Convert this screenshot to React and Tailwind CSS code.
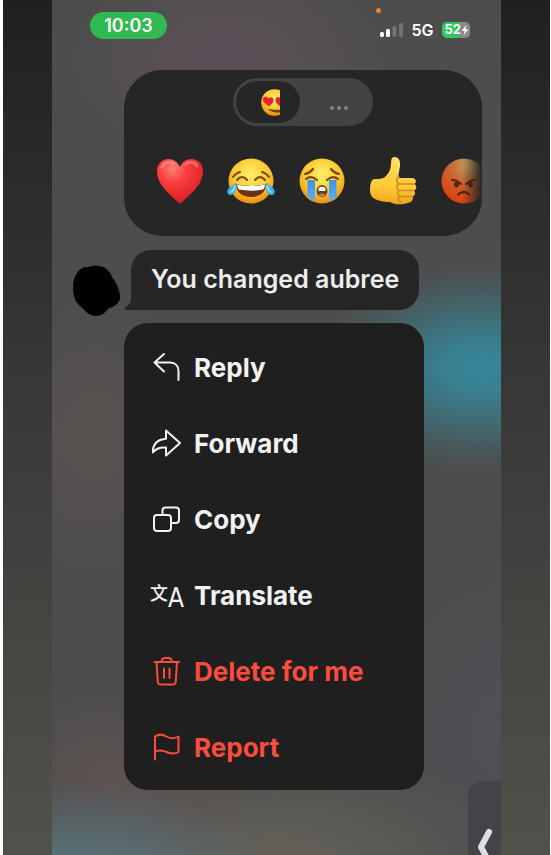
import { useState } from 'react';

const ink = { fill: 'none', stroke: 'currentColor', strokeWidth: 2, strokeLinecap: 'round', strokeLinejoin: 'round' };

function ReplyIcon() {
  return (
    <svg viewBox="0 0 30 30" className="size-[30px] shrink-0" aria-hidden="true" {...ink}>
      <path d="M12 2 2.500 10.500l9.500 9M2.500 10.500H18c5.500 0 8.500 3.500 8.500 8.500V28" />
    </svg>
  );
}

function ForwardIcon() {
  return (
    <svg viewBox="0 0 30 30" className="size-[30px] shrink-0" aria-hidden="true" {...ink}>
      <path d="M14 2.500 28 15 14 27.500v-8C8 19 3.500 21 .8 24.500 .8 16 5 11.500 14 10.800z" />
    </svg>
  );
}

function CopyIcon() {
  return (
    <svg viewBox="0 0 30 30" className="size-[30px] shrink-0" aria-hidden="true" {...ink}>
      <rect x="2" y="11" width="17" height="16" rx="3" />
      <path d="M10.500 11V6.500c0-2 1-3 3-3H24c2 0 3 1 3 3V16c0 2-1 3-3 3h-5" />
    </svg>
  );
}

function TranslateIcon() {
  return (
    <svg viewBox="0 0 30 30" className="size-[30px] shrink-0 overflow-visible" aria-hidden="true" fill="currentColor">
      <text x="-2" y="20" fontSize="18" fontWeight="500" fontFamily="'Noto Sans CJK SC', sans-serif">文</text>
      <text x="16" y="27" fontSize="26" fontWeight="400" fontFamily="'Liberation Sans Narrow', 'DejaVu Sans Condensed', sans-serif">A</text>
    </svg>
  );
}

function TrashIcon() {
  return (
    <svg viewBox="0 0 30 30" className="size-[30px] shrink-0" aria-hidden="true" {...ink}>
      <path d="M2.500 6h24.500M9.500 6c.3-3 1.500-4 3.500-4h3.500c2 0 3.200 1 3.500 4M4.500 6l1.300 20c.2 1.700 1 2.500 2.700 2.500H21c1.700 0 2.500-.8 2.700-2.500L25 6M12 12.500v9.500M17.500 12.500v9.500" />
    </svg>
  );
}

function FlagIcon() {
  return (
    <svg viewBox="0 0 30 30" className="size-[30px] shrink-0" aria-hidden="true" {...ink}>
      <path d="M3 27.500V4.500C7 1.500 11 2.500 14.500 4.500S22 7 26.500 4.500V20c-4.500 2.500-8.500 1.500-12 0S7 17.500 3 20" />
    </svg>
  );
}

function EmojiPaint() {
  return (
    <svg width="0" height="0" className="absolute" aria-hidden="true">
      <defs>
        <radialGradient id="face" cx="50%" cy="36%" r="66%">
          <stop offset="0" stopColor="#fff06a" />
          <stop offset=".6" stopColor="#fdc92f" />
          <stop offset="1" stopColor="#e8860f" />
        </radialGradient>
        <radialGradient id="heart" cx="35%" cy="22%" r="85%">
          <stop offset="0" stopColor="#ff8078" />
          <stop offset=".35" stopColor="#f9403f" />
          <stop offset="1" stopColor="#d9161d" />
        </radialGradient>
        <linearGradient id="tear" x1="0" y1="0" x2="0" y2="1">
          <stop offset="0" stopColor="#3f8fe6" />
          <stop offset="1" stopColor="#57b4fa" />
        </linearGradient>
        <linearGradient id="hand" x1="0" y1="0" x2="0" y2="1">
          <stop offset="0" stopColor="#ffdf5c" />
          <stop offset=".6" stopColor="#ffcb3b" />
          <stop offset="1" stopColor="#f2a51f" />
        </linearGradient>
        <radialGradient id="angry" cx="62%" cy="12%" r="85%">
          <stop offset="0" stopColor="#c5a765" />
          <stop offset=".45" stopColor="#c66e38" />
          <stop offset="1" stopColor="#dc4310" />
        </radialGradient>
      </defs>
    </svg>
  );
}

function HeartEmoji() {
  return (
    <svg viewBox="0 0 48 48" className="size-12 shrink-0">
      <path d="M24 47C16 39 1 29 1 14 1 7 6 2 12.500 2c5 0 9.500 3 11.500 8 2-5 6.500-8 11.500-8C42 2 47 7 47 14c0 15-15 25-23 33z" fill="url(#heart)" />
      <path d="M6 10c2-5 8-6 12-3M30 7c4-3 9-2 11 2" fill="none" stroke="#ffa29a" strokeOpacity=".5" strokeWidth="3" strokeLinecap="round" />
    </svg>
  );
}

function JoyEmoji() {
  return (
    <svg viewBox="0 0 48 48" className="size-12 shrink-0">
      <circle cx="24" cy="24" r="22.500" fill="url(#face)" />
      <path d="M6 20q3-4 7-5M42 20q-3-4-7-5M10 23q5-6 10 0M28 23q5-6 10 0" fill="none" stroke="#7a4510" strokeWidth="2" strokeLinecap="round" />
      <path d="M9 27c9 2.500 21 2.500 30 0 0 8-6 13-15 13S9 35 9 27z" fill="#6b3410" />
      <path d="M10 27.500c9 2 19 2 28 0 0 2.500-1 4-2 5-8 1.500-16 1.500-24 0-1-1-2-2.500-2-5z" fill="#fff" />
      <path d="M9 25c1 6-.5 12-5 13-4 .5-5-4-2-7 2-2 5-3 7-6zM39 25c-1 6 .5 12 5 13 4 .5 5-4 2-7-2-2-5-3-7-6z" fill="#38b5f2" />
      <path d="M4 35c2 0 3-3 4-6M44 35c-2 0-3-3-4-6" fill="none" stroke="#a9e6ff" strokeWidth="1.500" strokeLinecap="round" />
    </svg>
  );
}

function SobEmoji() {
  return (
    <svg viewBox="0 0 48 48" className="size-12 shrink-0">
      <circle cx="24" cy="24" r="22.500" fill="url(#face)" />
      <path d="M9.500 23H17v21q-4-1-7.500-5zM31 23h7.500v16q-3 4-7.500 5z" fill="url(#tear)" />
      <path d="M7 17q5-1 8-5M41 17q-5-1-8-5M8 22q5-4 11 1M40 22q-5-4-11 1" fill="none" stroke="#7a4510" strokeWidth="2.200" strokeLinecap="round" />
      <ellipse cx="24" cy="34" rx="5.500" ry="6" fill="#75400f" />
      <path d="M20.500 31q3.500-2.500 7 0v3h-7z" fill="#fff" />
      <ellipse cx="24" cy="38" rx="3" ry="1.500" fill="#b3855b" />
    </svg>
  );
}

function ThumbEmoji() {
  return (
    <svg viewBox="0 0 48 48" className="size-12 shrink-0">
      <path d="M3 23c3-2 9 0 13-3 4-4 6-8 6-13 0-5 1-7.500 4-7 4 .5 5.500 4 5 9l-2 12h14c4 0 5 4 2.500 6 2.500 1.500 2.500 5.500-.5 6.500 2 2 1 5.500-1.500 6 1 3-.5 5.500-3.500 6-6 2.500-14 2.500-19-.5-5 0-9-.5-14-2.500-4-1.500-6-5-6-9.500 0-4 .5-7.500 2-9.500z" fill="url(#hand)" />
      <path d="M30 20c-3 1-3 5 0 7h15M30 27c-3 1-3 5 0 6.500h14M30 33.500c-2 2-2 4.500 1 6h12M30 39.500c-1 2-1 4 2 5.500" fill="none" stroke="#d08a18" strokeWidth="1.600" strokeLinecap="round" />
      <path d="M28 3c2 2 2 7 0 12" fill="none" stroke="#ffe98a" strokeWidth="1.500" strokeLinecap="round" />
    </svg>
  );
}

function AngryEmoji() {
  return (
    <svg viewBox="0 0 48 48" className="size-12 shrink-0">
      <circle cx="24" cy="24" r="22.500" fill="url(#angry)" />
      <path d="M12 23q5 0 9 4M35 23q-5 0-9 4" fill="none" stroke="#5b2110" strokeWidth="2.200" strokeLinecap="round" />
      <ellipse cx="16.500" cy="27.500" rx="2.500" ry="3" fill="#5b2110" />
      <ellipse cx="30.500" cy="27.500" rx="2.500" ry="3" fill="#5b2110" />
      <path d="M18 37.500q5.500-5 11 0" fill="none" stroke="#5b2110" strokeWidth="2.200" strokeLinecap="round" />
    </svg>
  );
}

// only the left part of the face is visible in the tab
function HeartEyesEmoji() {
  return (
    <svg viewBox="0 0 19 27" className="h-[27px] w-[19px]">
      <circle cx="13.500" cy="13.500" r="13.300" fill="url(#face)" />
      <path d="M8 17.500C5 15 1.500 13 2 9.500 3 7 6 7 7.500 9.500c2-2.500 5-1 5 1.500 0 3-2.500 4.500-4.500 6.500zM19 17.500c-2-2-4.500-3.500-4.500-6.500 0-2.500 3-4 4.500-2z" fill="#e52432" />
      <path d="M6.500 19.500c4 1.300 8 1.500 12.500 1.300v2.700c-5 .5-9-.5-12.500-4z" fill="#70400f" />
    </svg>
  );
}

const reactions = [
  { name: 'Love', Emoji: HeartEmoji },
  { name: 'Laugh', Emoji: JoyEmoji },
  { name: 'Cry', Emoji: SobEmoji },
  { name: 'Like', Emoji: ThumbEmoji },
  { name: 'Angry', Emoji: AngryEmoji },
];

const actions = [
  { label: 'Reply', Icon: ReplyIcon },
  { label: 'Forward', Icon: ForwardIcon },
  { label: 'Copy', Icon: CopyIcon },
  { label: 'Translate', Icon: TranslateIcon },
  { label: 'Delete for me', Icon: TrashIcon, danger: true },
  { label: 'Report', Icon: FlagIcon, danger: true },
];

function StatusBar() {
  return (
    <header className="flex h-[70px] items-start justify-between pt-3 pr-[31px] pl-[38px]">
      <div className="flex h-[27px] w-[77px] items-center justify-center rounded-full bg-[#2fb950] text-lg font-semibold text-white">
        10:03
      </div>
      <div className="relative flex h-9 items-center gap-2 text-white">
        <span className="absolute -top-1 -left-1 size-[5px] rounded-full bg-[#e78432]" />
        <svg viewBox="0 0 23 14" className="h-[14px] w-[23px]" aria-hidden="true">
          <rect x="0" y="9" width="4" height="5" rx="1.500" fill="#fff" />
          <rect x="6" y="6" width="4" height="8" rx="1.500" fill="#fff" />
          <rect x="12.500" y="3" width="4" height="11" rx="1.500" fill="#737373" />
          <rect x="19" y="0" width="4" height="14" rx="1.500" fill="#737373" />
        </svg>
        <span className="text-base font-semibold">5G</span>
        <span className="flex h-4 items-center rounded-[5px] bg-linear-to-r from-[#32c759] from-60% to-[#8b8b8b] to-60% pr-px pl-[3px] text-[13px] font-bold">
          52
          <svg viewBox="0 0 8 12" className="h-[10px] w-2" aria-hidden="true">
            <path d="M5.500 0 0 7h3.500L2.500 12 8 5H4.500z" fill="#fff" />
          </svg>
        </span>
      </div>
    </header>
  );
}

function ReactionPanel() {
  const [tab, setTab] = useState('emoji');

  return (
    <section className="relative mr-[19px] ml-[72px] overflow-hidden rounded-[38px] bg-[#262626] pt-2 pb-[31px]">
      <div className="mx-auto flex h-12 w-[140px] rounded-full bg-[#434343] p-[3px]">
        <button
          aria-label="Emoji reactions"
          onClick={() => setTab('emoji')}
          className={`flex w-16 items-center justify-center rounded-full pl-1 ${tab === 'emoji' ? 'bg-[#262626]' : ''}`}
        >
          <HeartEyesEmoji />
        </button>
        <button
          aria-label="More reactions"
          onClick={() => setTab('more')}
          className={`flex flex-1 items-center justify-center gap-[3px] rounded-full pt-3 pl-2 ${tab === 'more' ? 'bg-[#262626]' : ''}`}
        >
          <span className="size-1 rounded-full bg-[#858585]" />
          <span className="size-1 rounded-full bg-[#858585]" />
          <span className="size-1 rounded-full bg-[#858585]" />
        </button>
      </div>
      <div className="mt-[31px] flex gap-[23px] overflow-hidden pl-8">
        {reactions.map(({ name, Emoji }) => (
          <button key={name} aria-label={name} className="shrink-0">
            <Emoji />
          </button>
        ))}
      </div>
      <div className="pointer-events-none absolute inset-y-0 right-0 w-5 bg-linear-to-r from-transparent to-[#262626]" />
    </section>
  );
}

function Message() {
  return (
    <div className="mt-[14px] flex items-end pl-[21px]">
      <svg viewBox="0 0 47 51" className="-mb-[6px] h-[51px] w-[47px] shrink-0" aria-hidden="true">
        <path d="M12 2C17 3 20-1 26 1c7 1 11 5 13 11 4 5 7 11 8 18 1 7-4 11-11 13-4 4-6 8-13 8C15 51 12 45 6 40 1 35 0 28 0 22 0 12 5 4 12 2z" fill="#020001" />
      </svg>
      <div className="relative ml-[11px] flex h-[60px] items-center rounded-[20px] bg-[#262626] px-5 text-[25px] font-semibold text-[#ededed]">
        <svg viewBox="0 0 24 26" className="absolute bottom-0 -left-[7px] h-[26px] w-6" aria-hidden="true">
          <path d="M7 0v15c0 4-2 6-6 8.500-1.500 1-.5 2.500 1 2.500h22z" fill="#262626" />
        </svg>
        <p className="relative whitespace-nowrap">You changed aubree</p>
      </div>
    </div>
  );
}

function ActionMenu() {
  return (
    <nav className="mt-[13px] ml-[72px] w-[300px] rounded-3xl bg-[#1f1f1f] pt-[6px] pb-[5px]">
      {actions.map(({ label, Icon, danger }) => (
        <button
          key={label}
          className={`flex h-[76px] w-full items-center gap-3 pl-7 text-[26px] font-bold ${danger ? 'text-[#fb4c3d]' : 'text-[#f2f2f2]'}`}
        >
          <Icon />
          {label}
        </button>
      ))}
    </nav>
  );
}

export default function App() {
  return (
    <div className="min-h-screen bg-white pr-px pl-[3px] font-[Inter,sans-serif]">
      <EmojiPaint />
      <div className="min-h-screen bg-linear-to-b from-[#221f1f] via-[#383838] via-45% to-[#51524b] px-[49px]">
        <main className="relative min-h-screen overflow-hidden bg-[#4d4d4d] bg-[radial-gradient(170px_105px_at_96%_43%,#36879a_0%,#36879ad9_25%,#36879a66_60%,#36879a1a_85%,#36879a00_100%),radial-gradient(170px_110px_at_39%_7%,#5c5058_0%,#5c505800_100%),radial-gradient(130px_150px_at_10%_51%,#585250_0%,#58525000_100%),radial-gradient(190px_90px_at_5%_102%,#5a7780_0%,#5a778000_100%),radial-gradient(150px_90px_at_15%_91%,#5e5352_0%,#5e535200_100%),radial-gradient(260px_130px_at_50%_102%,#67645b_0%,#67645b00_100%),radial-gradient(130px_180px_at_100%_86%,#504f56_0%,#504f5600_100%)] pb-16">
          <StatusBar />
          <ReactionPanel />
          <Message />
          <ActionMenu />
          <button
            aria-label="Open side panel"
            className="absolute right-0 bottom-0 flex h-[74px] w-[33px] items-end justify-center rounded-tl-2xl bg-[#444347]"
          >
            <svg viewBox="0 0 16 28" className="h-7 w-4" fill="none" stroke="#dedde8" strokeWidth="6" strokeLinecap="round" strokeLinejoin="round" aria-hidden="true">
              <path d="M12 5 4 20l8 15" />
            </svg>
          </button>
        </main>
      </div>
    </div>
  );
}
